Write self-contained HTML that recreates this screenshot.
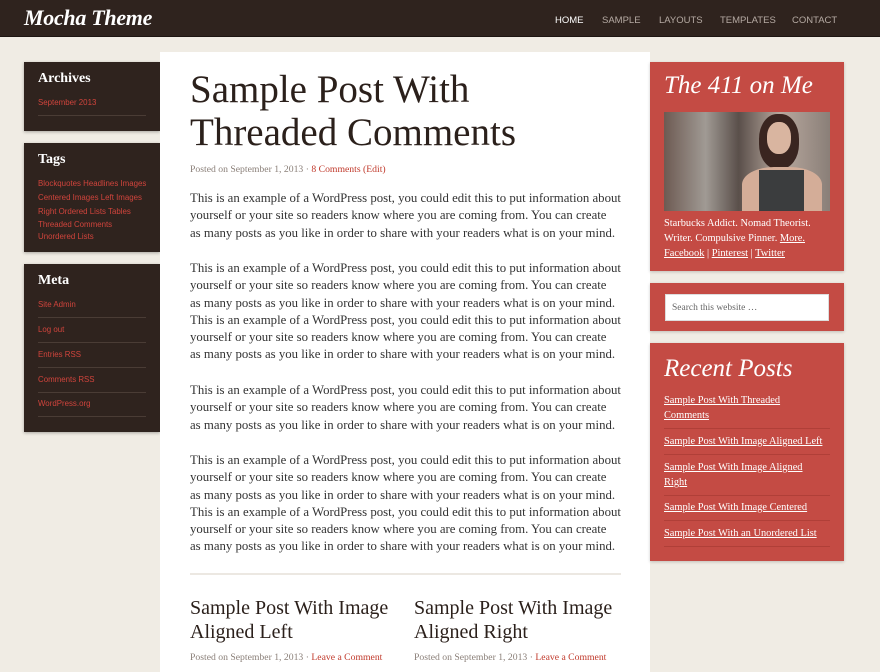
<!DOCTYPE html>
<html><head><meta charset="utf-8"><style>
*{margin:0;padding:0;box-sizing:border-box}
body{width:880px;height:660px;overflow:hidden;background:#f0ece4;font-family:"Liberation Serif",serif;position:relative}
.hdr{position:absolute;left:0;top:0;width:880px;height:37px;background:#2f231e;border-bottom:1px solid #1d1512}
.logo{position:absolute;left:24px;top:5px;color:#fff;font:italic bold 22px "Liberation Serif",serif;letter-spacing:-0.3px}
.nav{position:absolute;top:15px;font:9.5px "Liberation Sans",sans-serif;color:#b5aaa3}
.box{position:absolute;background:#2f231e;box-shadow:0 1px 3px rgba(0,0,0,.3)}
.box h3{position:absolute;left:14px;color:#fff;font:bold 14px "Liberation Serif",serif}
.lk{position:absolute;left:14px;font:7.9px "Liberation Sans",sans-serif;color:#d0443c;white-space:nowrap}
.sep{position:absolute;left:14px;width:108px;border-top:1px solid #4a3c35}
.main{position:absolute;left:160px;top:52px;width:490px;height:620px;background:#fff}
.t{position:absolute;left:190px;color:#2b201b;font-size:39px;line-height:44px;white-space:nowrap}
.meta{position:absolute;left:190px;font:9.7px "Liberation Serif",serif;color:#8a7f78;white-space:nowrap}
.meta span{color:#c0392b}
.p{position:absolute;left:190px;font-size:12.8px;line-height:17.3px;color:#333;white-space:nowrap}
.red{position:absolute;left:650px;width:194px;background:#c44b44;box-shadow:0 1px 3px rgba(0,0,0,.2)}
.red h2{position:absolute;left:14px;color:#fff;font:italic 25px "Liberation Serif",serif}
.rl{position:absolute;left:14px;color:#fff;text-decoration:underline;font-size:10.4px;line-height:15px;white-space:nowrap}
.rs{position:absolute;left:14px;width:166px;border-top:1px solid #b03f38}
</style></head><body>
<div class="hdr"><div class="logo">Mocha Theme</div>
<div class="nav" style="left:555px;color:#fff">HOME</div>
<div class="nav" style="left:602px">SAMPLE</div>
<div class="nav" style="left:659px">LAYOUTS</div>
<div class="nav" style="left:720px">TEMPLATES</div>
<div class="nav" style="left:792px">CONTACT</div></div>

<div class="box" style="left:24px;top:62px;width:136px;height:69px">
<h3 style="top:9px">Archives</h3><div class="lk" style="top:36px">September 2013</div><div class="sep" style="top:53px"></div></div>
<div class="box" style="left:24px;top:143px;width:136px;height:109px">
<h3 style="top:9px">Tags</h3>
<div class="lk" style="top:36px">Blockquotes Headlines Images</div>
<div class="lk" style="top:50px">Centered Images Left Images</div>
<div class="lk" style="top:64px">Right Ordered Lists Tables</div>
<div class="lk" style="top:77px">Threaded Comments</div>
<div class="lk" style="top:89px">Unordered Lists</div></div>
<div class="box" style="left:24px;top:264px;width:136px;height:168px">
<h3 style="top:9px">Meta</h3>
<div class="lk" style="top:36px">Site Admin</div><div class="sep" style="top:53px"></div>
<div class="lk" style="top:61px">Log out</div><div class="sep" style="top:78px"></div>
<div class="lk" style="top:86px">Entries RSS</div><div class="sep" style="top:103px"></div>
<div class="lk" style="top:111px">Comments RSS</div><div class="sep" style="top:128px"></div>
<div class="lk" style="top:135px">WordPress.org</div><div class="sep" style="top:152px"></div></div>

<div class="main"></div>
<div class="t" style="top:68px">Sample Post With</div>
<div class="t" style="top:111px">Threaded Comments</div>
<div class="meta" style="top:164px">Posted on September 1, 2013 · <span>8 Comments (Edit)</span></div>
<div class="p" style="top:190px">This is an example of a WordPress post, you could edit this to put information about<br>yourself or your site so readers know where you are coming from. You can create<br>as many posts as you like in order to share with your readers what is on your mind.</div>
<div class="p" style="top:260px">This is an example of a WordPress post, you could edit this to put information about<br>yourself or your site so readers know where you are coming from. You can create<br>as many posts as you like in order to share with your readers what is on your mind.<br>This is an example of a WordPress post, you could edit this to put information about<br>yourself or your site so readers know where you are coming from. You can create<br>as many posts as you like in order to share with your readers what is on your mind.</div>
<div class="p" style="top:382px">This is an example of a WordPress post, you could edit this to put information about<br>yourself or your site so readers know where you are coming from. You can create<br>as many posts as you like in order to share with your readers what is on your mind.</div>
<div class="p" style="top:452px">This is an example of a WordPress post, you could edit this to put information about<br>yourself or your site so readers know where you are coming from. You can create<br>as many posts as you like in order to share with your readers what is on your mind.<br>This is an example of a WordPress post, you could edit this to put information about<br>yourself or your site so readers know where you are coming from. You can create<br>as many posts as you like in order to share with your readers what is on your mind.</div>
<div style="position:absolute;left:190px;top:573px;width:431px;border-top:2px solid #ece8e2"></div>
<div class="t" style="top:596px;font-size:20px;line-height:24px">Sample Post With Image<br>Aligned Left</div>
<div class="t" style="left:414px;top:596px;font-size:20px;line-height:24px">Sample Post With Image<br>Aligned Right</div>
<div class="meta" style="top:652px">Posted on September 1, 2013 · <span>Leave a Comment</span></div>
<div class="meta" style="left:414px;top:652px">Posted on September 1, 2013 · <span>Leave a Comment</span></div>

<div class="red" style="top:62px;height:209px">
<h2 style="top:10px">The 411 on Me</h2>
<div style="position:absolute;left:14px;top:50px;width:166px;height:99px;background:linear-gradient(90deg,#6d5a52 0%,#a09a94 25%,#5a4f4a 45%,#b8a89e 70%,#8a7f78 100%)">
<div style="position:absolute;left:95px;top:2px;width:40px;height:55px;border-radius:45%;background:#3a2520"></div>
<div style="position:absolute;left:103px;top:10px;width:24px;height:32px;border-radius:45%;background:#d9b5a0"></div>
<div style="position:absolute;left:78px;top:55px;width:80px;height:44px;border-radius:40% 40% 0 0;background:#d4ad98"></div>
<div style="position:absolute;left:95px;top:58px;width:45px;height:41px;background:#3b3d3e"></div></div>
<div class="rl" style="top:154px;text-decoration:none">Starbucks Addict. Nomad Theorist.</div>
<div class="rl" style="top:169px;text-decoration:none">Writer. Compulsive Pinner. <u>More.</u></div>
<div class="rl" style="top:184px;text-decoration:none"><u>Facebook</u> | <u>Pinterest</u> | <u>Twitter</u></div></div>
<div class="red" style="top:283px;height:48px">
<div style="position:absolute;left:15px;top:11px;width:164px;height:27px;background:#fff;border:1px solid #ddd;font-size:9.5px;color:#666;padding:8px 6px">Search this website …</div></div>
<div class="red" style="top:343px;height:218px">
<h2 style="top:12px">Recent Posts</h2>
<div class="rl" style="top:50px">Sample Post With Threaded</div>
<div class="rl" style="top:65px">Comments</div><div class="rs" style="top:85px"></div>
<div class="rl" style="top:91px">Sample Post With Image Aligned Left</div><div class="rs" style="top:111px"></div>
<div class="rl" style="top:117px">Sample Post With Image Aligned</div>
<div class="rl" style="top:132px">Right</div><div class="rs" style="top:152px"></div>
<div class="rl" style="top:157px">Sample Post With Image Centered</div><div class="rs" style="top:177px"></div>
<div class="rl" style="top:183px">Sample Post With an Unordered List</div><div class="rs" style="top:203px"></div></div>
</body></html>
